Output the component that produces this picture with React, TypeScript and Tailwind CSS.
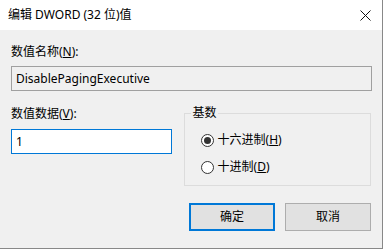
import React from "react";

const font = { fontFamily: '"Noto Sans", "Noto Sans CJK SC", sans-serif' };

function Radio({ checked, label, mnemonic }: { checked: boolean; label: string; mnemonic: string }) {
  return (
    <label className="flex h-4 items-center gap-[4px] pl-[16px]">
      <span className="flex h-[13px] w-[13px] items-center justify-center rounded-full border border-[#333] bg-white">
        {checked && <span className="h-[7px] w-[7px] rounded-full bg-[#333]" />}
      </span>
      <span>
        {label}(<span className="underline underline-offset-1">{mnemonic}</span>)
      </span>
    </label>
  );
}

export default function App() {
  return (
    <div className="flex h-[250px] w-[385px] bg-white text-[12px] leading-4 text-black" style={font}>
      <div className="flex h-[249px] w-[383px] flex-col border-r border-b border-[#888] bg-[#f0f0f0]">
        {/* title bar */}
        <div className="flex h-[30px] items-center justify-between bg-white pl-[8px] pr-[11px]">
          <span className="pb-px">编辑 DWORD (32 位)值</span>
          <svg width="11" height="11" viewBox="0 0 11 11">
            <path d="M0.5 0.5 L10.5 10.5 M10.5 0.5 L0.5 10.5" stroke="#111" strokeWidth="1" />
          </svg>
        </div>

        <div className="flex flex-col px-[11px] pt-[14px]">
          <div>
            数值名称(<span className="underline underline-offset-1">N</span>):
          </div>
          <div className="mt-[6px] flex h-[25px] w-[361px] items-center border border-[#a0a0a0] bg-[#f0f0f0] px-[4px]">
            DisablePagingExecutive
          </div>

          <div className="mt-[14px] flex gap-[12px]">
            <div className="flex w-[161px] flex-col pt-[1px]">
              <div>
                数值数据(<span className="underline underline-offset-1">V</span>):
              </div>
              <div className="mt-[7px] flex h-[25px] items-center border border-[#0078d7] bg-white px-[4px]">
                1
              </div>
            </div>
            <fieldset className="flex w-[188px] flex-col gap-[11px] border border-[#dcdcdc] pt-[11px] pb-[10px]">
              <legend className="ml-[6px] pl-[2px] pr-[1px]">基数</legend>
              <Radio checked label="十六进制" mnemonic="H" />
              <Radio checked={false} label="十进制" mnemonic="D" />
            </fieldset>
          </div>

          <div className="mt-[17px] flex justify-end gap-[10px]">
            <button className="flex h-[28px] w-[86px] items-center justify-center border-2 border-[#0078d7] bg-[#e1e1e1]">
              确定
            </button>
            <button className="flex h-[28px] w-[86px] items-center justify-center border border-[#adadad] bg-[#e1e1e1]">
              取消
            </button>
          </div>
        </div>
      </div>
    </div>
  );
}
